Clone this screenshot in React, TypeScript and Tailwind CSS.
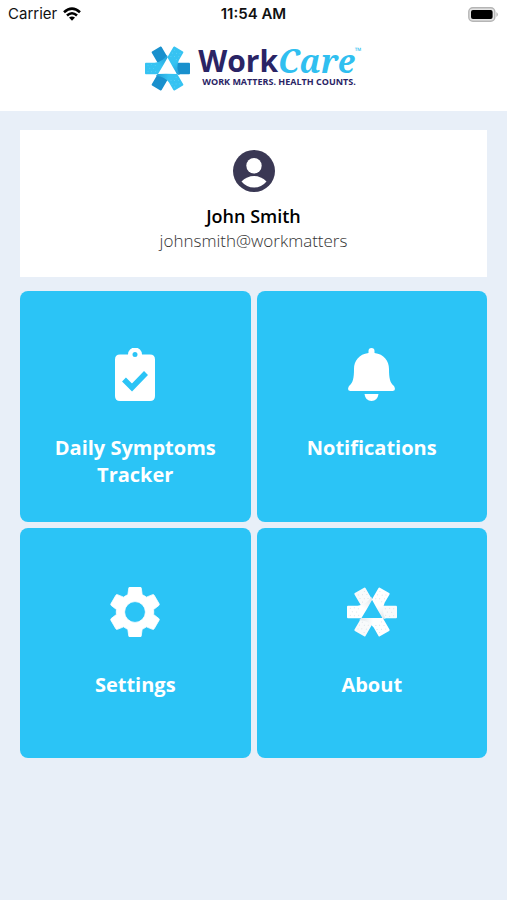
import type { ReactNode } from "react"

const ARMS = [0, 120, 240]

const DOTS = [
	[30, 87], [42, 85], [54, 88], [36, 97], [49, 98], [30, 108], [42, 109], [55, 108],
]

function Pinwheel({ className, white }: { className: string; white?: boolean }) {
	const gradient = white ? "foldWhite" : "foldBlue"
	const dot = white ? "#d5dde2" : "#6bd7f8"

	return (
		<svg viewBox="20 23 150 150" className={className} aria-hidden="true">
			<defs>
				<linearGradient id={gradient} x1="0.3" x2="1" y1="0.8" y2="0">
					<stop offset="0.4" stopColor={white ? "#ffffff" : "#36c3f2"} />
					<stop offset="1" stopColor={white ? "#dde5ea" : "#1f9cd6"} />
				</linearGradient>
			</defs>
			{ARMS.map((angle) => (
				<g key={angle} transform={`rotate(${angle} 95 98)`}>
					<g transform="rotate(60 95 98)">
						<rect x="20" y="79" width="44" height="38" rx="3" fill={white ? "#f8fafb" : "#1990cd"} />
						{white &&
							DOTS.map(([x, y]) => <circle key={`${x}-${y}`} cx={x} cy={y} r="1.5" fill={dot} />)}
					</g>
					<path
						d="M23 79 H52 Q80 76 93 52 Q95 56 95 62 Q82 86 63 117 H23 Q20 117 20 114 V82 Q20 79 23 79 Z"
						fill={`url(#${gradient})`}
					/>
					{DOTS.map(([x, y]) => (
						<circle key={`${x}-${y}`} cx={x} cy={y} r="1.5" fill={dot} />
					))}
				</g>
			))}
		</svg>
	)
}

function WifiIcon() {
	return (
		<svg viewBox="0 0 18 14" className="w-[18px] h-3.5" aria-hidden="true">
			<g fill="none" stroke="#000" strokeWidth="2.6">
				<path d="M1 5.2 Q9 -2 17 5.2" />
				<path d="M4 8.5 Q9 4 14 8.5" />
			</g>
			<path d="M6 10.6 Q9 8.2 12 10.6 L9 13.8 Z" />
		</svg>
	)
}

function BatteryIcon() {
	return (
		<svg viewBox="0 0 31 15" className="w-[31px] h-[15px]" aria-hidden="true">
			<rect x="0.8" y="0.8" width="26" height="13.4" rx="4" fill="#e4e4e4" stroke="#b5b5b5" strokeWidth="1.4" />
			<rect x="3" y="3" width="21.6" height="9" rx="2" />
			<path d="M28.5 5 Q31 7.5 28.5 10 Z" fill="#a5a5a5" />
		</svg>
	)
}

function UserIcon() {
	return (
		<svg viewBox="0 0 42 42" className="size-[42px]" aria-hidden="true">
			<circle cx="21" cy="21" r="21" fill="#3a3854" />
			<circle cx="21" cy="15.8" r="7.7" fill="#fff" />
			<path d="M8.5 31.5 Q14 26 21 26 Q28 26 33.5 31.5 Q28.5 37.5 21 37.5 Q13.5 37.5 8.5 31.5 Z" fill="#fff" />
		</svg>
	)
}

function ClipboardIcon() {
	return (
		<svg viewBox="0 0 40 54" className="w-10 h-[54px]" aria-hidden="true">
			<path
				fill="#fff"
				fillRule="evenodd"
				d="M5 6.5 H13 A7 7 0 0 1 27 6.5 H35 Q40 6.5 40 11.5 V48 Q40 53 35 53 H5 Q0 53 0 48 V11.5 Q0 6.5 5 6.5 Z M20 4 A2.5 2.5 0 0 0 20 9 A2.5 2.5 0 0 0 20 4 Z"
			/>
			<path d="M9 31.5 L17 39.5 L31 25" fill="none" stroke="#2bc4f6" strokeWidth="5.5" />
		</svg>
	)
}

function BellIcon() {
	return (
		<svg viewBox="0 0 48 54" className="w-12 h-[54px]" fill="#fff" aria-hidden="true">
			<path d="M20.5 3 Q20.5 0 23.5 0 Q26.5 0 26.5 3 V5 C36 6 41 13 41 21 C41 30 42 35 46 38 Q48.5 43 44.5 43 H2.5 Q-1.5 43 1 38 C5 35 6 30 6 21 C6 13 11 6 20.5 5 Z" />
			<path d="M16.5 46 H30.5 Q29.5 53 23.5 53 Q17.5 53 16.5 46 Z" />
		</svg>
	)
}

function GearIcon() {
	return (
		<svg viewBox="2.4 2.4 19.2 19.2" className="size-[50px]" fill="#fff" aria-hidden="true">
			<path
				stroke="#fff"
				strokeWidth="0.3"
				d="M19.14 12.94c.04-.3.06-.61.06-.94 0-.32-.02-.64-.07-.94l2.03-1.58c.18-.14.23-.41.12-.61l-1.92-3.32c-.12-.22-.37-.29-.59-.22l-2.39.96c-.5-.38-1.03-.7-1.62-.94l-.36-2.54c-.04-.24-.24-.41-.48-.41h-3.84c-.24 0-.43.17-.47.41l-.36 2.54c-.59.24-1.13.57-1.62.94l-2.39-.96c-.22-.08-.47 0-.59.22L2.74 8.87c-.12.21-.08.47.12.61l2.03 1.58c-.05.3-.09.63-.09.94s.02.64.07.94l-2.03 1.58c-.18.14-.23.41-.12.61l1.92 3.32c.12.22.37.29.59.22l2.39-.96c.5.38 1.03.7 1.62.94l.36 2.54c.05.24.24.41.48.41h3.84c.24 0 .44-.17.47-.41l.36-2.54c.59-.24 1.13-.56 1.62-.94l2.39.96c.22.08.47 0 .59-.22l1.92-3.32c.12-.22.07-.47-.12-.61l-2.01-1.58zM12 16a4 4 0 1 1 0-8 4 4 0 0 1 0 8z"
			/>
		</svg>
	)
}

function Tile({ label, children }: { label: string; children: ReactNode }) {
	return (
		<button
			type="button"
			className="aspect-square rounded-lg bg-[#2bc4f6] flex flex-col items-center pt-[57px] px-6 text-white text-[20px] leading-[27px] font-bold"
		>
			<span className="h-[54px] flex items-center justify-center">{children}</span>
			<span className="mt-8">{label}</span>
		</button>
	)
}

export default function App() {
	return (
		<div className="min-h-screen bg-[#e8eff8] font-['Open_Sans',sans-serif]">
			<header className="bg-white pb-5">
				{/* Status bar */}
				<div className="h-7 px-2 grid grid-cols-3 items-center text-[15px] leading-5 text-[#111] font-['Inter',sans-serif]">
					<div className="flex items-center gap-1.5">
						<span>Carrier</span>
						<WifiIcon />
					</div>
					<span className="text-center font-semibold whitespace-nowrap">11:54 AM</span>
					<div className="flex justify-end">
						<BatteryIcon />
					</div>
				</div>

				{/* Brand */}
				<div className="mt-[17px] flex justify-center items-start gap-2">
					<Pinwheel className="mt-px size-[45px]" />
					<div className="text-[#2a2465]">
						<div className="flex items-start text-[30px] leading-8">
							<span className="font-bold">Work</span>
							<span className="font-['Noto_Serif','DejaVu_Serif',serif] text-[32px] italic font-bold text-[#30bff0]">
								Care
							</span>
							<span className="text-[9px] leading-3 text-[#30bff0]">™</span>
						</div>
						<p className="ml-1 text-[9px] leading-[10px] font-bold whitespace-nowrap">
							WORK MATTERS. HEALTH COUNTS.
						</p>
					</div>
				</div>
			</header>

			<main className="px-5 pt-[19px]">
				{/* Profile */}
				<section className="bg-white flex flex-col items-center pt-5 pb-6">
					<UserIcon />
					<h1 className="mt-3 text-[18px] leading-[25px] font-semibold text-black">John Smith</h1>
					<p className="text-[17px] leading-6 font-light text-[#333]">johnsmith@workmatters</p>
				</section>

				{/* Menu */}
				<nav className="mt-3.5 grid grid-cols-2 gap-1.5">
					<Tile label="Daily Symptoms Tracker">
						<ClipboardIcon />
					</Tile>
					<Tile label="Notifications">
						<BellIcon />
					</Tile>
					<Tile label="Settings">
						<GearIcon />
					</Tile>
					<Tile label="About">
						<Pinwheel className="size-[50px]" white />
					</Tile>
				</nav>
			</main>
		</div>
	)
}
